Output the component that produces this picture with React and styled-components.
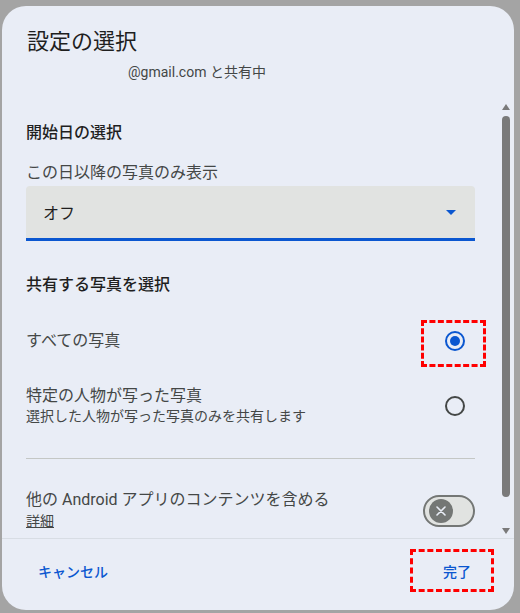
import React from 'react';
import styled, { createGlobalStyle } from 'styled-components';

const GlobalStyle = createGlobalStyle`
  html, body {
    margin: 0;
    padding: 0;
    background: #a4a4a4;
  }
  body {
    font-family: Roboto, "Noto Sans CJK JP", sans-serif;
  }
`;

const Page = styled.div`
  width: 520px;
  height: 613px;
  padding: 6px 6px 3px 2px;
  box-sizing: border-box;
`;

const Dialog = styled.div`
  width: 512px;
  height: 604px;
  background: #e9edf6;
  border-radius: 24px;
  display: flex;
  flex-direction: column;
  overflow: hidden;
  color: #1f1f1f;
`;

const Header = styled.div`
  padding: 22px 24px 14px 25px;
`;

const Title = styled.h1`
  margin: 0;
  font-size: 22px;
  line-height: 28px;
  font-weight: 400;
  color: #1f1f1f;
`;

const Subtitle = styled.div`
  margin: 6px 0 0 101px;
  font-size: 14px;
  line-height: 20px;
  color: #444746;
`;

const Body = styled.div`
  flex: 1;
  display: flex;
  min-height: 0;
`;

const Content = styled.div`
  flex: 1;
  padding: 27px 25px 0 24px;
  display: flex;
  flex-direction: column;
`;

const SectionTitle = styled.div`
  font-size: 16px;
  line-height: 20px;
  font-weight: 500;
  color: #1f1f1f;
  margin-top: ${p => p.$top || 0}px;
`;

const Label = styled.div`
  margin-top: 20px;
  font-size: 16px;
  line-height: 20px;
  color: #444746;
`;

const Select = styled.div`
  margin-top: 3px;
  height: 52px;
  background: #e1e3e1;
  border-radius: 4px 4px 0 0;
  border-bottom: 3px solid #0b57d0;
  display: flex;
  align-items: center;
  justify-content: space-between;
  padding: 0 19px 0 17px;
  font-size: 16px;
  color: #1f1f1f;
`;

const Caret = styled.span`
  width: 0;
  height: 0;
  border-left: 5px solid transparent;
  border-right: 5px solid transparent;
  border-top: 5px solid #0b57d0;
`;

const OptionRow = styled.div`
  display: flex;
  align-items: center;
  justify-content: space-between;
  padding: ${p => p.$pad || '18px 0'};
`;

const OptionText = styled.div`
  display: flex;
  flex-direction: column;
`;

const OptionTitle = styled.div`
  font-size: 16px;
  line-height: 20px;
  color: #444746;
`;

const OptionHint = styled.div`
  font-size: 14px;
  line-height: 20px;
  color: #444746;
`;

const LinkText = styled.span`
  font-size: 14px;
  line-height: 22px;
  color: #444746;
  text-decoration: underline;
`;

const RadioWrap = styled.div`
  position: relative;
  width: 20px;
  height: 20px;
  margin-right: 10px;
  ${p => p.$marked && `
    &::after {
      content: '';
      position: absolute;
      left: -24px;
      top: -11px;
      width: 59px;
      height: 41px;
      border: 3px dashed #ff0000;
    }
  `}
`;

const Radio = styled.div`
  width: 20px;
  height: 20px;
  box-sizing: border-box;
  border-radius: 50%;
  border: 2px solid ${p => (p.$checked ? '#0b57d0' : '#444746')};
  display: flex;
  align-items: center;
  justify-content: center;
  &::before {
    content: '';
    width: 10px;
    height: 10px;
    border-radius: 50%;
    background: ${p => (p.$checked ? '#0b57d0' : 'transparent')};
  }
`;

const Divider = styled.div`
  height: 1px;
  background: #c4c7c5;
  margin-top: 15px;
`;

const Toggle = styled.div`
  width: 52px;
  height: 32px;
  box-sizing: border-box;
  border: 2px solid #747775;
  border-radius: 16px;
  background: #e1e3e1;
  display: flex;
  align-items: center;
  padding-left: 4px;
`;

const Thumb = styled.div`
  width: 24px;
  height: 24px;
  border-radius: 50%;
  background: #747775;
  display: flex;
  align-items: center;
  justify-content: center;
`;

const Scrollbar = styled.div`
  width: 12px;
  margin-right: 2px;
  display: flex;
  flex-direction: column;
  align-items: center;
  padding: 8px 0 4px;
  box-sizing: border-box;
`;

const Arrow = styled.span`
  width: 0;
  height: 0;
  border-left: 4px solid transparent;
  border-right: 4px solid transparent;
  ${p => (p.$up ? 'border-bottom: 6px solid #7a7a7a;' : 'border-top: 6px solid #7a7a7a;')}
`;

const Thumbbar = styled.div`
  width: 8px;
  height: 381px;
  margin-top: 6px;
  border-radius: 4px;
  background: #7a7a7a;
`;

const Spacer = styled.div`
  flex: 1;
`;

const Footer = styled.div`
  height: 72px;
  border-top: 1px solid #d8dde4;
  display: flex;
  align-items: flex-start;
  justify-content: space-between;
  padding: 10px 20px 0 20px;
  box-sizing: border-box;
`;

const TextButton = styled.button`
  height: 43px;
  box-sizing: border-box;
  background: none;
  font-family: inherit;
  font-size: 14px;
  font-weight: 500;
  color: #0b57d0;
  padding: ${p => (p.$marked ? '0 20px 0 30px' : '0 13px')};
  border: ${p => (p.$marked ? '3px dashed #ff0000' : '3px solid transparent')};
  cursor: pointer;
`;

export default function App() {
  return (
    <>
      <GlobalStyle />
      <Page>
        <Dialog>
          <Header>
            <Title>設定の選択</Title>
            <Subtitle>@gmail.com と共有中</Subtitle>
          </Header>
          <Body>
            <Content>
              <SectionTitle>開始日の選択</SectionTitle>
              <Label>この日以降の写真のみ表示</Label>
              <Select>
                <span>オフ</span>
                <Caret />
              </Select>
              <SectionTitle $top={34}>共有する写真を選択</SectionTitle>
              <OptionRow $pad="36px 0 18px">
                <OptionTitle>すべての写真</OptionTitle>
                <RadioWrap $marked>
                  <Radio $checked />
                </RadioWrap>
              </OptionRow>
              <OptionRow $pad="17px 0 17px">
                <OptionText>
                  <OptionTitle>特定の人物が写った写真</OptionTitle>
                  <OptionHint>選択した人物が写った写真のみを共有します</OptionHint>
                </OptionText>
                <RadioWrap>
                  <Radio />
                </RadioWrap>
              </OptionRow>
              <Divider />
              <OptionRow $pad="31px 0 0">
                <OptionText>
                  <OptionTitle>他の Android アプリのコンテンツを含める</OptionTitle>
                  <LinkText>詳細</LinkText>
                </OptionText>
                <Toggle>
                  <Thumb>
                    <svg width="12" height="12" viewBox="0 0 12 12">
                      <path d="M2 2 L10 10 M10 2 L2 10" stroke="#e9edf6" strokeWidth="1.6" strokeLinecap="round" />
                    </svg>
                  </Thumb>
                </Toggle>
              </OptionRow>
            </Content>
            <Scrollbar>
              <Arrow $up />
              <Thumbbar />
              <Spacer />
              <Arrow />
            </Scrollbar>
          </Body>
          <Footer>
            <TextButton>キャンセル</TextButton>
            <TextButton $marked>完了</TextButton>
          </Footer>
        </Dialog>
      </Page>
    </>
  );
}
